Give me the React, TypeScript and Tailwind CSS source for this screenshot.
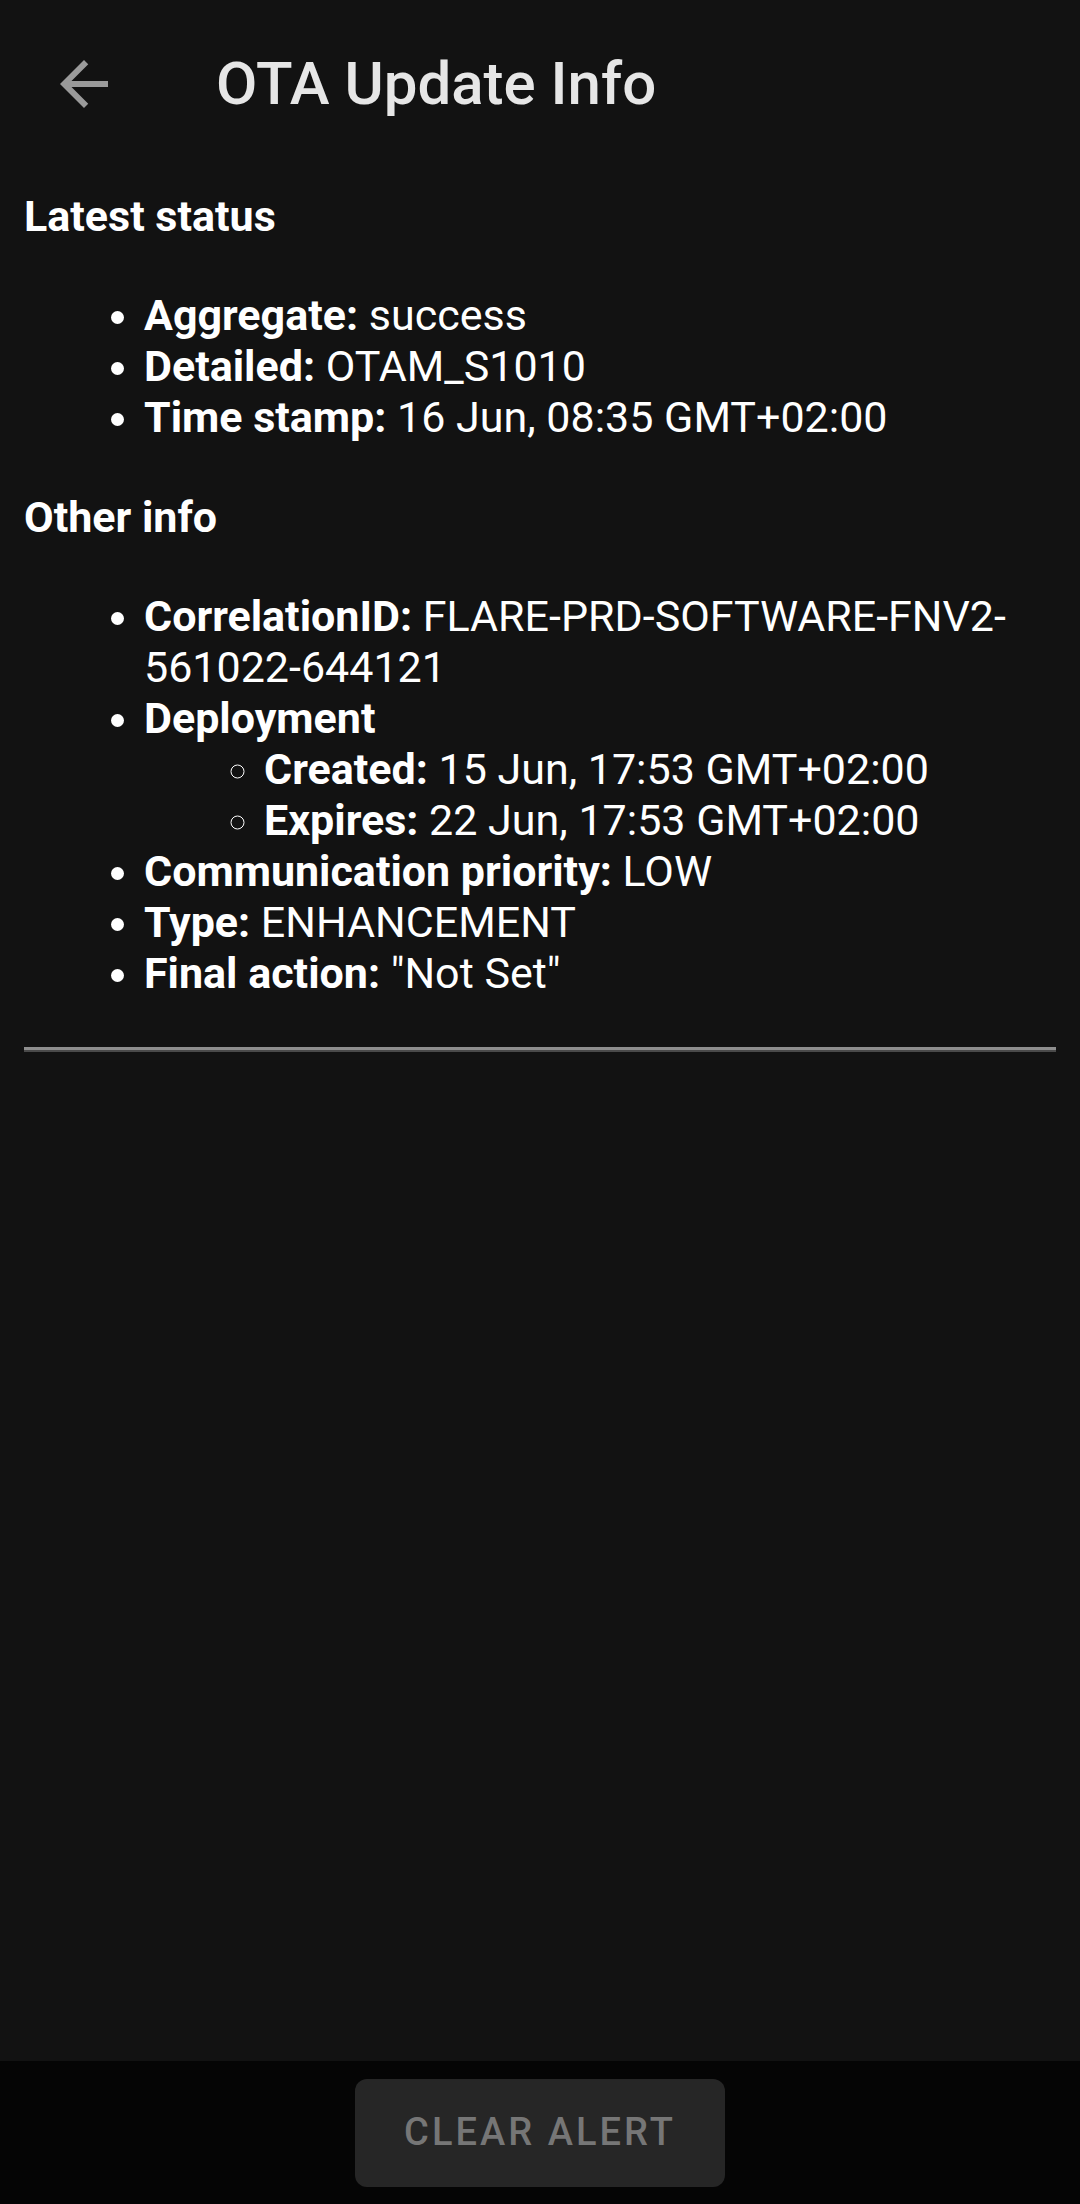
import * as React from "react"

type Row = { label: string; value?: React.ReactNode; children?: Row[] }

const latest: Row[] = [
  { label: "Aggregate:", value: "success" },
  { label: "Detailed:", value: "OTAM_S1010" },
  { label: "Time stamp:", value: "16 Jun, 08:35 GMT+02:00" },
]

const other: Row[] = [
  {
    label: "CorrelationID:",
    value: (
      <>
        FLARE-PRD-SOFTWARE-FNV2-
        <br />
        561022-644121
      </>
    ),
  },
  {
    label: "Deployment",
    children: [
      { label: "Created:", value: "15 Jun, 17:53 GMT+02:00" },
      { label: "Expires:", value: "22 Jun, 17:53 GMT+02:00" },
    ],
  },
  { label: "Communication priority:", value: "LOW" },
  { label: "Type:", value: "ENHANCEMENT" },
  { label: "Final action:", value: '"Not Set"' },
]

function BackArrow() {
  return (
    <svg viewBox="0 0 24 24" className="h-[72px] w-[72px]" fill="#9a9a9a">
      <path d="M20 11H7.83l5.59-5.59L12 4l-8 8 8 8 1.41-1.41L7.83 13H20v-2z" />
    </svg>
  )
}

function InfoList({ rows, nested }: { rows: Row[]; nested?: boolean }) {
  return (
    <ul className={nested ? "list-[circle] pl-[120px]" : "list-disc pl-[120px]"}>
      {rows.map((r) => (
        <li key={r.label}>
          <span className="font-bold">{r.label}</span>
          {r.value !== undefined && <> {r.value}</>}
          {r.children && <InfoList rows={r.children} nested />}
        </li>
      ))}
    </ul>
  )
}

export default function App() {
  return (
    <div className="flex h-[2204px] w-[1080px] flex-col bg-[#121212] font-['Roboto',sans-serif] text-white">
      <header className="flex h-[168px] shrink-0 items-center">
        <div className="ml-[48px]">
          <BackArrow />
        </div>
        <h1 className="ml-[96px] text-[60px] font-medium text-[#e6e6e6]">OTA Update Info</h1>
      </header>

      <main className="flex-1 px-6 text-[43px] leading-[51px]">
        <div className="mt-[23px] font-bold">Latest status</div>
        <div className="mt-[48px]">
          <InfoList rows={latest} />
        </div>

        <div className="mt-[49px] font-bold">Other info</div>
        <div className="mt-[48px]">
          <InfoList rows={other} />
        </div>

        <div className="mt-[48px] border-t-[3px] border-b-[2px] border-t-[#8e8e8e] border-b-[#4a4a4a]" />
      </main>

      <footer className="flex h-[143px] shrink-0 items-center justify-center bg-[#050505]">
        <button className="h-[108px] w-[370px] rounded-[12px] bg-[#262626] text-[38px] font-medium tracking-[0.08em] text-[#767676]">
          CLEAR ALERT
        </button>
      </footer>
    </div>
  )
}
